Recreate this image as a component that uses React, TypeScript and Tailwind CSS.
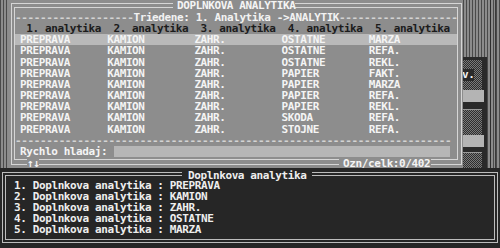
const ROWS = [
  ['PREPRAVA', 'KAMION', 'ZAHR.', 'OSTATNE', 'MARZA'],
  ['PREPRAVA', 'KAMION', 'ZAHR.', 'OSTATNE', 'REFA.'],
  ['PREPRAVA', 'KAMION', 'ZAHR.', 'OSTATNE', 'REKL.'],
  ['PREPRAVA', 'KAMION', 'ZAHR.', 'PAPIER', 'FAKT.'],
  ['PREPRAVA', 'KAMION', 'ZAHR.', 'PAPIER', 'MARZA'],
  ['PREPRAVA', 'KAMION', 'ZAHR.', 'PAPIER', 'REFA.'],
  ['PREPRAVA', 'KAMION', 'ZAHR.', 'PAPIER', 'REKL.'],
  ['PREPRAVA', 'KAMION', 'ZAHR.', 'SKODA', 'REFA.'],
  ['PREPRAVA', 'KAMION', 'ZAHR.', 'STOJNE', 'REFA.'],
]

const HEADS = ['1. analytika', '2. analytika', '3. analytika', '4. analytika', '5. analytika']

// first row of the table is what shows in the bottom panel
const SELECTED = ROWS[0]

// dithered backdrop of the text-mode screen
const stripes = 'bg-[image:repeating-linear-gradient(90deg,#4a4a4a_0_1px,#8c8c8c_1px_3px)]'
const checker = 'bg-[image:repeating-conic-gradient(#7a7a7a_0_25%,#2e2e2e_0_50%)] bg-[length:2px_2px]'

function BackWindows() {
  return (
    <div className={`w-[37px] h-full flex ${stripes}`}>
      <div className="w-[24px] flex flex-col">
        <div className="h-[57px]" />
        <div className="flex-1 flex flex-col bg-[#2a2a2a] pt-[3px] pr-[5px]">
          <div className={`h-[30px] ${checker} text-[#f2f2f2] flex items-center`}>
            <span className="bg-[#2a2a2a] -ml-[1px]">v.</span>
          </div>
          <div className="h-[12px] bg-[#b4b4b4] -mr-[2px]" />
          <div className="h-[8px] border-b border-[#9a9a9a]" />
          <div className={`h-[25px] ${checker}`} />
          <div className="h-[12px] bg-[#b4b4b4] -mr-[2px]" />
          <div className="h-[6px] border-b border-[#9a9a9a]" />
          <div className={`flex-1 ${checker}`} />
        </div>
      </div>
      <div className="w-[3px]" />
      <div className="w-[1px] bg-[#2e2e2e]" />
      <div className="w-[4px]" />
      <div className="w-[1px] bg-[#3a3a3a]" />
    </div>
  )
}

function Dialog() {
  return (
    <div className="relative w-[455px] h-full bg-[#8d8d8d] pt-[3px] pl-[3px] pr-[1px] pb-[3px]">
      <div className="h-full border border-[#d6d6d6] pt-[3px] pl-[2px] pr-[3px] pb-[4px]">
        <div className="h-full border border-[#d6d6d6] flex flex-col pt-[4px]">
          {/* sort line */}
          <div className="h-[11.16px] whitespace-pre text-[#d4d4d4]">
            {'-'.repeat(19)}
            <span className="text-[#f2f2f2]">Triedene: 1. Analytika -&gt;ANALYTIK</span>
            {'-'.repeat(19)}
          </div>

          {/* column headers */}
          <div className="h-[11.16px] pl-[5px] grid grid-cols-[repeat(5,87.2px)] whitespace-pre text-[#1c1c1c]">
            {HEADS.map((h) => (
              <span key={h}>{' ' + h}</span>
            ))}
          </div>

          {ROWS.map((row, i) => (
            <div
              key={i}
              className={`h-[11.16px] pl-[5px] grid grid-cols-[repeat(5,87.2px)] whitespace-pre text-[#f4f4f4] ${
                i === 0 ? 'bg-[#b9b9b9]' : ''
              }`}
            >
              {row.map((cell, j) => (
                <span key={j}>{cell}</span>
              ))}
            </div>
          ))}

          <div className="h-[11.16px] whitespace-pre text-[#d4d4d4]">{'-'.repeat(70)}</div>

          {/* quick search */}
          <div className="h-[11.16px] pl-[5px] flex whitespace-pre text-[#f4f4f4]">
            <span>Rychlo hladaj: </span>
            <div className="w-[336px] h-full bg-[#b6b6b6]" />
          </div>
        </div>
      </div>

      {/* texts lying on the frame */}
      <div className="absolute left-[165px] top-0 h-[11px] leading-[11px] pl-[4px] bg-[#8d8d8d] text-[#f4f4f4] whitespace-pre">
        DOPLNKOVA ANALYTIKA
      </div>
      <div className="absolute left-[19px] top-[158px] h-[11px] leading-[11px] bg-[#8d8d8d] text-[#f4f4f4]">
        ↑↓
      </div>
      <div className="absolute left-[331px] top-[158px] h-[11px] leading-[11px] pl-[4px] pr-[1px] bg-[#8d8d8d] text-[#f4f4f4]">
        Ozn/celk:0/402
      </div>
    </div>
  )
}

function DetailPanel() {
  return (
    <div className="relative h-[80px] bg-[#262626] pt-[4px] px-[2px] pb-[5px]">
      <div className="h-full border border-[#bdbdbd] p-[2px]">
        <div className="h-full border border-[#bdbdbd] flex flex-col pt-[3.5px] pl-[8px] text-[#eeeeee]">
          {SELECTED.map((v, i) => (
            <div key={i} className="h-[11.16px] whitespace-pre">
              {`${i + 1}. Doplnkova analytika : ${v}`}
            </div>
          ))}
        </div>
      </div>
      <div className="absolute left-[182px] top-[2px] h-[11px] leading-[11px] px-[6px] bg-[#262626] text-[#eeeeee] whitespace-pre">
        Doplnkova analytika
      </div>
    </div>
  )
}

export default function App() {
  return (
    <div className="w-[500px] h-[248px] overflow-hidden bg-[#262626] font-['DejaVu_Sans_Mono',monospace] font-bold text-[11px] leading-[11.16px] tracking-[-0.39px]">
      <div className="flex h-[168px]">
        <div className={`w-[8px] h-full ${stripes}`} />
        <Dialog />
        <BackWindows />
      </div>
      <DetailPanel />
    </div>
  )
}
